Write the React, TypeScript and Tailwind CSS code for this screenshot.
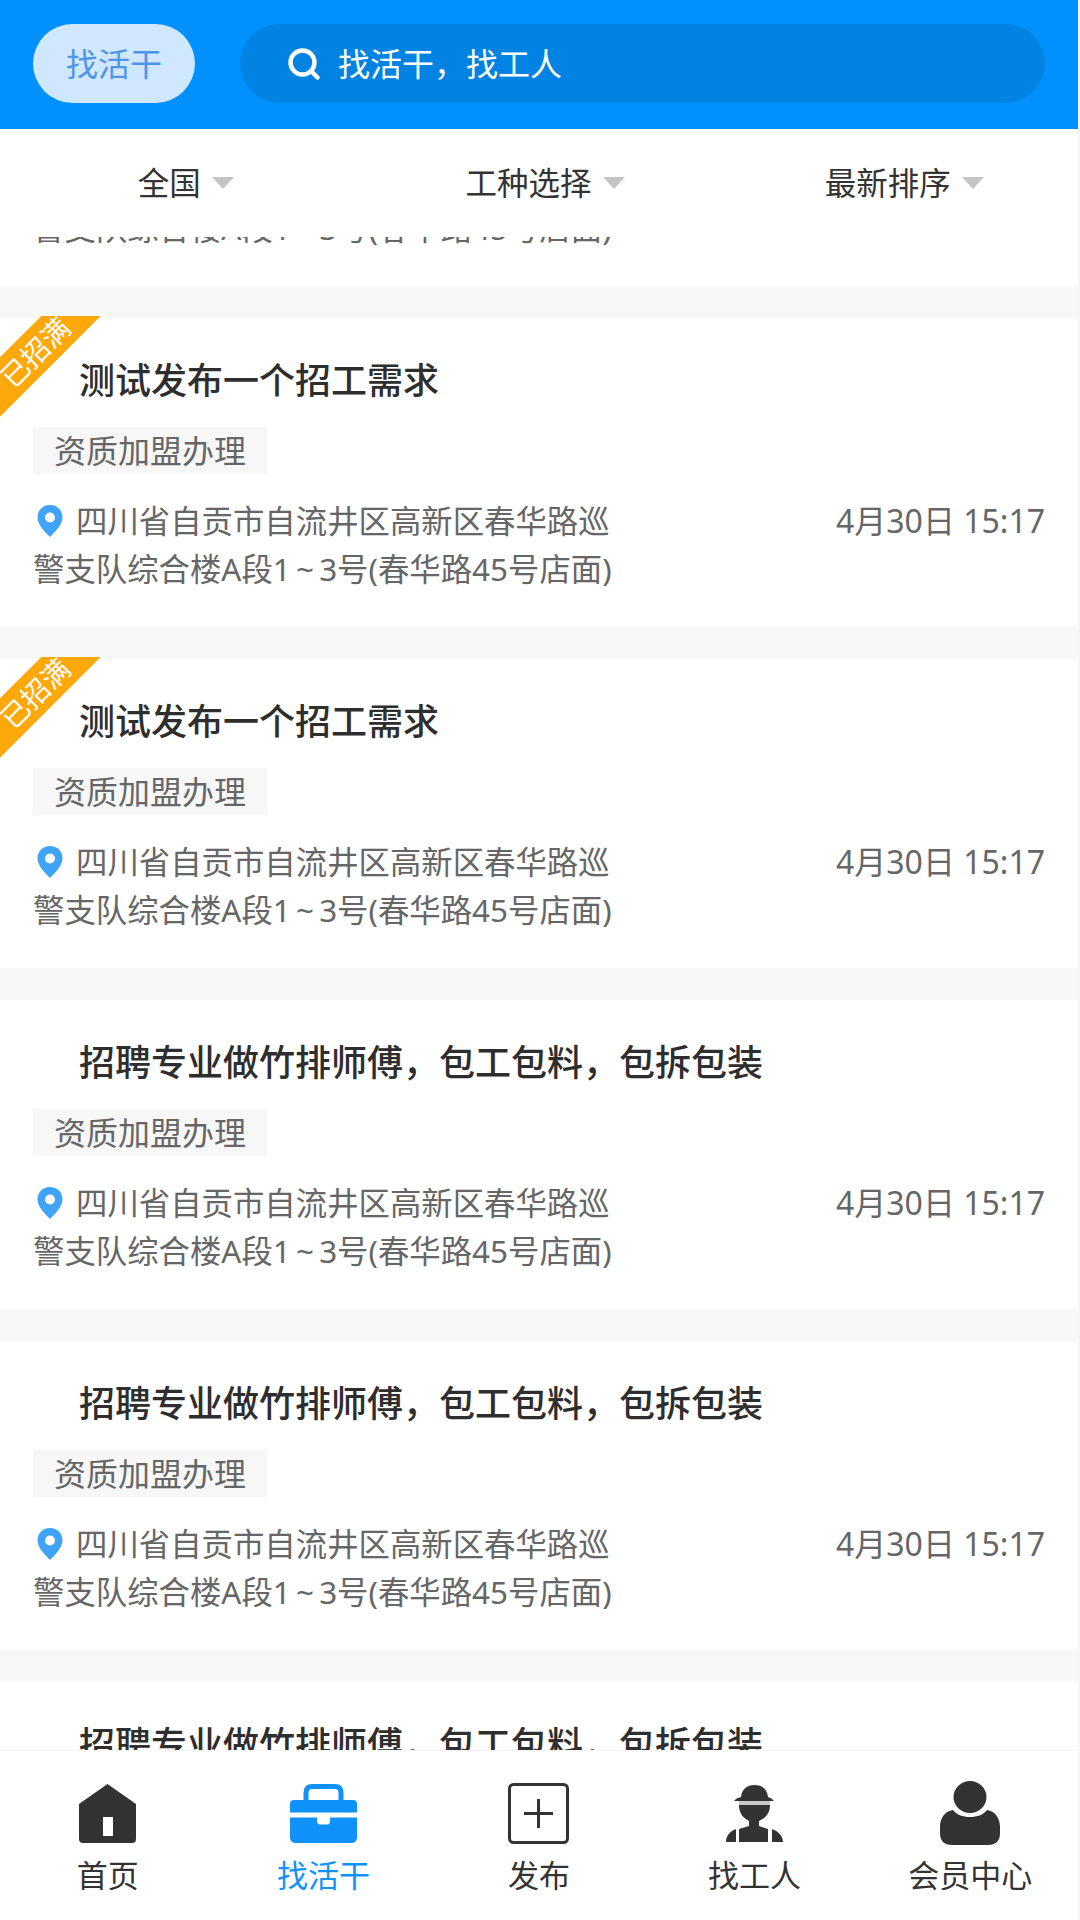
import { Search } from "lucide-react";

const FONT = "font-['Noto_Sans','Noto_Sans_CJK_SC',sans-serif]";

function Caret() {
  return <span className="w-0 h-0 border-x-[11px] border-x-transparent border-t-[12px] border-t-[#c4c4c4]" />;
}

function FilterItem({ label }: { label: string }) {
  return (
    <div className="flex items-center justify-center gap-[11px] pl-[12px]">
      <span className="text-[31.500px] leading-none text-[#333]">{label}</span>
      <Caret />
    </div>
  );
}

function Ribbon() {
  return (
    <div className="absolute left-0 top-[-2px] w-[101px] h-[101px] overflow-hidden">
      <div className="absolute left-[-65px] top-[15px] w-[200px] h-[42px] -rotate-45 bg-[#ffa80c] flex items-center justify-center text-[28px] leading-none text-white">
        已招满
      </div>
    </div>
  );
}

function Pin() {
  return (
    <svg width="26" height="32" viewBox="0 0 26 32" className="absolute left-0 top-[2px]">
      <path d="M13 0C5.8 0 0.5 5.4 0.5 12.2 0.5 20 9 28 13 32c4-4 12.5-12 12.5-19.8C25.500 5.400 20.200 0 13 0z" fill="#3fa4f8" />
      <circle cx="13" cy="12.500" r="5" fill="#fff" />
    </svg>
  );
}

function JobCard({ title, full }: { title: string; full?: boolean }) {
  return (
    <div className="relative shrink-0 bg-white h-[309px] px-[33px] pt-[40px]">
      {full && <Ribbon />}
      <h3 className="pl-[46px] text-[36px] leading-[46px] font-medium text-[#2e2e2e]">{title}</h3>
      <div className="mt-[23px] w-[234px] h-[47px] bg-[#f7f7f7] flex items-center justify-center text-[32px] leading-none text-[#666]">
        资质加盟办理
      </div>
      <div className="mt-[23px] flex justify-between items-start">
        <p className="relative w-[582px] text-[31.400px] leading-[48px] text-[#666] indent-[43px]">
          <span className="absolute left-[4px] top-[6px] indent-0"><Pin /></span>
          四川省自贡市自流井区高新区春华路巡警支队综合楼A段1{"\u2009"}~{"\u2009"}3号(春华路45号店面)
        </p>
        <span className="text-[32px] leading-[48px] text-[#666]">4月30日 15:17</span>
      </div>
    </div>
  );
}

function HomeIcon() {
  return (
    <svg width="57" height="59" viewBox="0 0 57 59">
      <path d="M28.500 0L57 20V55q0 4-4 4H4q-4 0-4-4V20z" fill="#333" />
      <rect x="24" y="33" width="10" height="19" fill="#fff" />
    </svg>
  );
}

function BagIcon() {
  return (
    <svg width="67" height="59" viewBox="0 0 67 59">
      <path d="M16 17V9q0-6.500 6-6.500h23q6 0 6 6.500v8" fill="none" stroke="#0f92fb" strokeWidth="5" />
      <path d="M4 16h59q4 0 4 4v8.500H0V20q0-4 4-4z" fill="#0f92fb" />
      <path d="M0 33.500h27v5l2 2h9l2-2v-5h27V53q0 6-6 6H6q-6 0-6-6z" fill="#0f92fb" />
    </svg>
  );
}

function PlusIcon() {
  return (
    <svg width="61" height="61" viewBox="0 0 61 61">
      <rect x="1.500" y="1.500" width="58" height="58" rx="4" fill="none" stroke="#333" strokeWidth="3" />
      <path d="M30.500 16v29M16 30.500h29" stroke="#333" strokeWidth="3" />
    </svg>
  );
}

function WorkerIcon() {
  return (
    <svg width="57" height="57" viewBox="0 0 57 57">
      {/* 帽子 */}
      <path d="M15 12C16 4 21 0 28.500 0S41 4 42 12q4 1 6 4H8q2-3 7-4z" fill="#333" />
      <rect x="13" y="16" width="31" height="4" fill="#c9c9c9" />
      {/* 脸和脖子 */}
      <path d="M13 20h31c0 8-4 13-11 16v6H23v-6c-6-3-10-8-10-16z" fill="#333" />
      {/* 身体 */}
      <path d="M23 41h10l9 3v13H13V44z" fill="#333" />
      <path d="M10 44v13H0c0-6 4-11 10-13zM46 44c6 2 11 7 11 13H46z" fill="#333" />
    </svg>
  );
}

function UserIcon() {
  return (
    <svg width="60" height="64" viewBox="0 0 60 64">
      <ellipse cx="30" cy="16" rx="16.500" ry="16" fill="#333" />
      <path d="M13 29c4 5 10 7 17 7s13-2 17-7c8 1 13 8 13 17v6q0 12-12 12H12Q0 64 0 52v-6c0-9 5-16 13-17z" fill="#333" />
    </svg>
  );
}

function NavItem({ label, active, children }: { label: string; active?: boolean; children: React.ReactNode }) {
  return (
    <div className="flex flex-col items-center">
      <div className="h-[64px] flex items-center justify-center">{children}</div>
      <span className={`mt-[12px] text-[31px] leading-[36px] ${active ? "text-[#0f92fb]" : "text-[#333]"}`}>{label}</span>
    </div>
  );
}

export default function App() {
  const title = "招聘专业做竹排师傅，包工包料，包拆包装";
  return (
    <div className={`${FONT} w-[1080px] h-[1920px] bg-[#f7f7f7] overflow-hidden`}>
      <div className="w-[1078px] h-full flex flex-col">
        {/* 顶部搜索 */}
        <header className="h-[129px] shrink-0 bg-[#0091ff] pl-[33px] pr-[33px] pt-[24px] flex gap-[45px]">
          <div className="w-[162px] h-[79px] rounded-[40px] bg-[#cfe8ff] flex items-center justify-center text-[32px] leading-none text-[#4f94e8]">
            找活干
          </div>
          <div className="flex-1 h-[79px] rounded-[40px] bg-[#0083e3] pl-[46px] flex items-center gap-[16px] text-white">
            <Search className="w-[36px] h-[36px]" strokeWidth={3} />
            <span className="text-[32px] leading-none">找活干，找工人</span>
          </div>
        </header>

        {/* 筛选 */}
        <div className="h-[108px] shrink-0 bg-white grid grid-cols-3 items-center z-10">
          <FilterItem label="全国" />
          <FilterItem label="工种选择" />
          <FilterItem label="最新排序" />
        </div>

        {/* 列表 */}
        <main className="flex-1 min-h-0 overflow-hidden bg-[#f8f8f8]">
          <div className="mt-[-260px] flex flex-col gap-[32px]">
            <JobCard title={title} />
            <JobCard title="测试发布一个招工需求" full />
            <JobCard title="测试发布一个招工需求" full />
            <JobCard title={title} />
            <JobCard title={title} />
            <JobCard title={title} />
          </div>
        </main>

        {/* 底部导航 */}
        <nav className="h-[170px] shrink-0 bg-white border-t border-[#f5f5f5] grid grid-cols-5 pt-[30px]">
          <NavItem label="首页"><HomeIcon /></NavItem>
          <NavItem label="找活干" active><BagIcon /></NavItem>
          <NavItem label="发布"><PlusIcon /></NavItem>
          <NavItem label="找工人"><WorkerIcon /></NavItem>
          <NavItem label="会员中心"><UserIcon /></NavItem>
        </nav>
      </div>
    </div>
  );
}
